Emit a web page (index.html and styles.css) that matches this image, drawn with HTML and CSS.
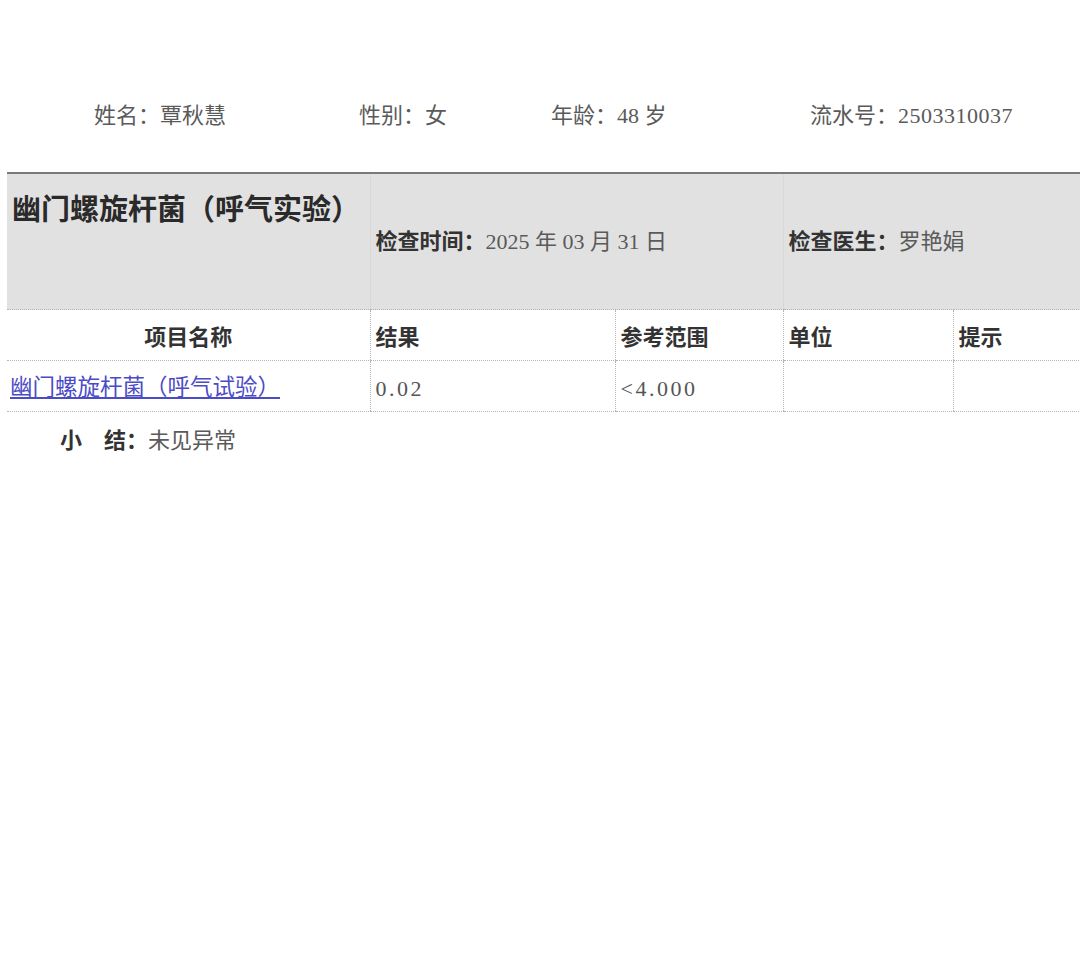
FILE: index.html
```html
<!DOCTYPE html>
<html lang="zh-CN">
<head>
<meta charset="utf-8">
<title>检查报告</title>
<link rel="stylesheet" href="styles.css">
</head>
<body>
<div class="page">
  <div class="info">
    <span class="info-item w-name">姓名：覃秋慧</span>
    <span class="info-item w-sex">性别：女</span>
    <span class="info-item w-age">年龄：48 岁</span>
    <span class="info-item">流水号：<span class="digits">2503310037</span></span>
  </div>
  <table class="report">
    <colgroup>
      <col class="c1"><col class="c2"><col class="c3"><col class="c4"><col class="c5">
    </colgroup>
    <tr class="band">
      <td class="title-cell"><div class="title">幽门螺旋杆菌（呼气实验）</div></td>
      <td colspan="2"><b class="label">检查时间：</b><span class="val">2025 年 03 月 31 日</span></td>
      <td colspan="2"><b class="label">检查医生：</b><span class="val">罗艳娟</span></td>
    </tr>
    <tr class="head">
      <th class="center">项目名称</th>
      <th>结果</th>
      <th>参考范围</th>
      <th>单位</th>
      <th>提示</th>
    </tr>
    <tr class="data">
      <td class="link-cell"><a class="item-link" href="#">幽门螺旋杆菌（呼气试验）</a></td>
      <td class="num">0.02</td>
      <td class="num">&lt;4.000</td>
      <td></td>
      <td></td>
    </tr>
  </table>
  <div class="summary"><b class="label">小　结：</b><span class="val">未见异常</span></div>
</div>
</body>
</html>
```

FILE: styles.css
```css
html, body {
  margin: 0;
  padding: 0;
  background: #fff;
  overflow: hidden;
}
.page {
  width: 1080px;
  height: 973px;
  overflow: hidden;
  font-family: "Liberation Serif", "Noto Sans CJK SC", serif;
  color: #555;
}
.info {
  display: flex;
  padding: 101px 0 0 94px;
  height: 30px;
  line-height: 30px;
  font-size: 22px;
  color: #5a5a5a;
  white-space: nowrap;
}
.w-name { width: 265px; }
.w-sex { width: 192px; }
.w-age { width: 259px; }
.digits { letter-spacing: 0.5px; }

.report {
  margin: 41px 0 0 7px;
  width: 1116px;
  table-layout: fixed;
  border-collapse: collapse;
}
.c1 { width: 363px; }
.c2 { width: 245px; }
.c3 { width: 168px; }
.c4 { width: 170px; }
.c5 { width: 170px; }

.report td, .report th {
  padding: 0 0 0 5px;
  text-align: left;
  white-space: nowrap;
  font-size: 22px;
}
.band td {
  background: #e1e1e1;
  border-top: 2px solid #7a7a7a;
  border-bottom: 1px dotted #b4b4b4;
  border-left: 1px dotted #cfcfcf;
  height: 130px;
  padding-bottom: 5px;
  vertical-align: middle;
}
.band td:first-child { border-left: none; }
.band .title-cell { vertical-align: top; }
.title {
  padding-top: 17px;
  line-height: 38px;
  font-size: 29px;
  font-weight: 700;
  color: #2a2a2a;
}
.label {
  font-weight: 700;
  color: #333;
}
.val { color: #5a5a5a; }

.head th, .data td {
  border-bottom: 1px dotted #b4b4b4;
  border-left: 1px dotted #b4b4b4;
  vertical-align: middle;
}
.head th { height: 50px; }
.data td { height: 44px; padding-top: 6px; }
.head th:first-child, .data td:first-child { border-left: none; }
.head th {
  font-weight: 700;
  color: #333;
}
.head th.center {
  text-align: center;
  padding: 0;
}
.data .link-cell { padding: 2px 0 4px 3px; }
.item-link {
  color: #4b4bc6;
  text-decoration: underline;
  font-size: 22.5px;
}
.num {
  font-size: 23px;
  letter-spacing: 2.5px;
  color: #555;
}
.summary {
  margin-top: 14px;
  padding-left: 60px;
  line-height: 30px;
  font-size: 22px;
}
```
